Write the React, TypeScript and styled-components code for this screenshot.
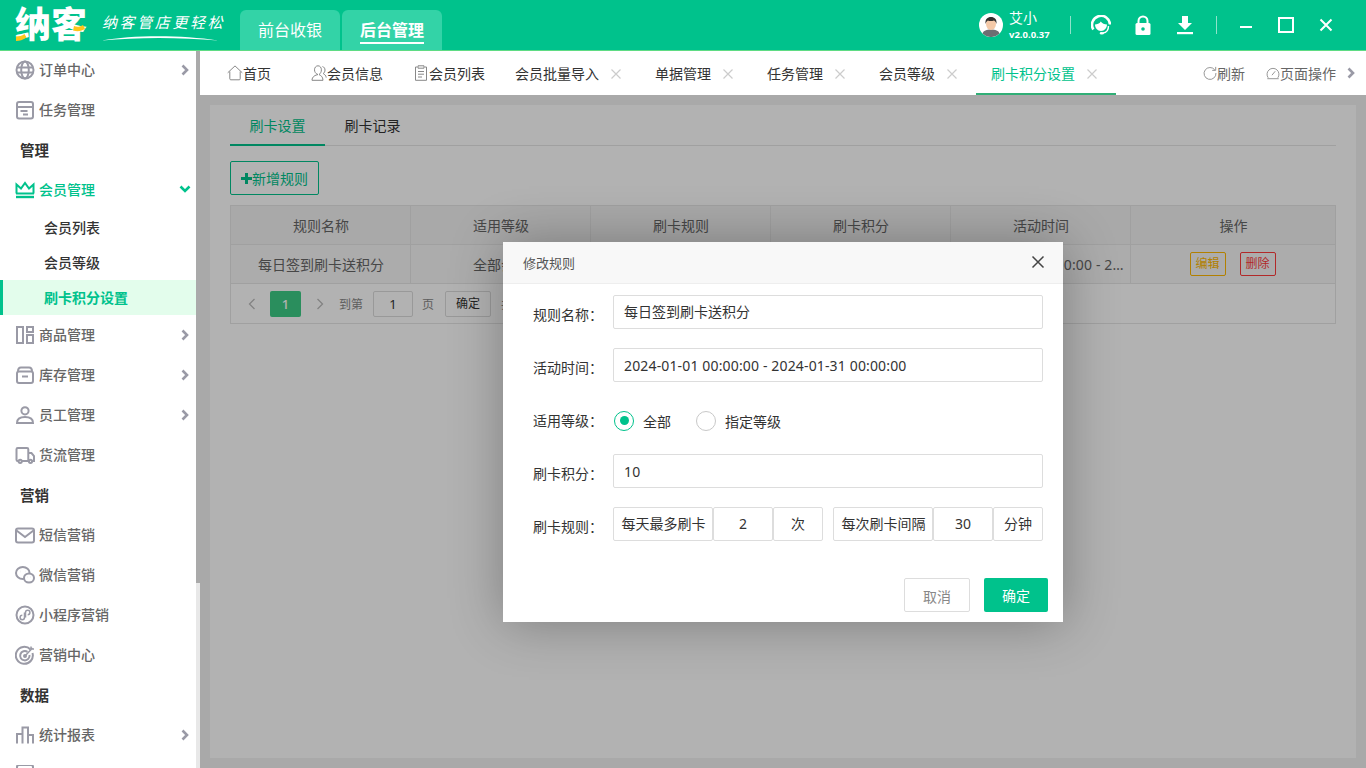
import React from 'react';
import styled, { createGlobalStyle } from 'styled-components';

const GREEN = '#00c28c';
const ICON_GRAY = '#9a9aa6';

type IconName =
    | 'globe' | 'task' | 'crown' | 'columns' | 'box' | 'user' | 'truck'
    | 'mail' | 'wechat' | 'mini' | 'target' | 'bars' | 'doc';

const iconShapes: Record<IconName, React.ReactNode> = {
    globe: (
        <>
            <circle cx="10" cy="10" r="8.5" />
            <ellipse cx="10" cy="10" rx="3.8" ry="8.5" />
            <path d="M2 7.5h16M2 12.5h16" />
        </>
    ),
    task: (
        <>
            <rect x="2" y="2" width="16" height="16.5" rx="2" />
            <path d="M2 7h16M5.5 11h7M8 14.5h5" />
        </>
    ),
    crown: (
        <>
            <path d="M1.5 13.5V4.5L6 8.5 10 3l4 5.5 4.5-4v9" />
            <path d="M1 13.5h18" />
            <path d="M1 17h18" strokeWidth="2.4" />
        </>
    ),
    columns: (
        <>
            <rect x="2" y="2" width="6" height="16" />
            <rect x="12" y="2" width="6" height="5" />
            <rect x="12" y="10" width="6" height="8" />
        </>
    ),
    box: (
        <>
            <path d="M3 6.5C3 4 4 2.5 6 2.5h8c2 0 3 1.5 3 4" />
            <rect x="2" y="6.5" width="16" height="11.5" rx="2" />
            <path d="M7 11.5h6" />
        </>
    ),
    user: (
        <>
            <circle cx="10" cy="5.8" r="3.6" />
            <path d="M2 18c0-4 3-6 8-6s8 2 8 6z" />
        </>
    ),
    truck: (
        <>
            <path d="M3.5 16H2.8C2 16 1.5 15.5 1.5 14.7V4.3C1.5 3.5 2 3 2.8 3H12c.8 0 1.3.5 1.3 1.3V16H7" />
            <path d="M13.5 8h3L19 11v5h-1.5" />
            <circle cx="5.2" cy="16.3" r="1.6" />
            <circle cx="15.5" cy="16.3" r="1.6" />
        </>
    ),
    mail: (
        <>
            <rect x="1" y="3.5" width="18" height="14" rx="2" />
            <path d="M1.5 5.5 10 12l8.5-6.5" />
        </>
    ),
    wechat: (
        <>
            <ellipse cx="7.8" cy="8" rx="6.8" ry="6" />
            <ellipse cx="14" cy="13" rx="5" ry="4.6" fill="#fff" />
            <path d="M5.5 6.5h.1M10 6.5h.1M12.5 12h.1M15.5 12h.1" />
        </>
    ),
    mini: (
        <>
            <circle cx="10" cy="10" r="8.5" />
            <path d="M9.5 7.5v5a2.2 2.2 0 1 1-2.2-2.2M10.5 12.5v-5a2.2 2.2 0 1 1 2.2 2.2" strokeWidth="1.5" />
        </>
    ),
    target: (
        <>
            <path d="M15.5 4.5A8.5 8.5 0 1 0 17.5 8" />
            <path d="M12.5 6.8A4.7 4.7 0 1 0 14.5 10" />
            <circle cx="10" cy="11" r="1" />
            <path d="M10 11 17.5 3M16 1.5V4h3" strokeWidth="1.5" />
        </>
    ),
    bars: <path d="M2 18.5V9h5.5v9.5M7.5 18.5V2.5H13v16M13 18.5V10h5v8.5" />,
    doc: <rect x="2" y="0" width="16" height="18" rx="2" />,
};

const GlobalStyle = createGlobalStyle`
    html, body {
        margin: 0;
        padding: 0;
        overflow: hidden;
    }
    body {
        font-family: "Noto Sans", "Noto Sans CJK SC", sans-serif;
        font-size: 14px;
        color: #333;
    }
    * {
        box-sizing: border-box;
    }
`;

type NavItem =
    | { kind: 'section'; label: string }
    | { kind: 'item'; label: string; icon: IconName; arrow?: 'right' | 'down'; open?: boolean }
    | { kind: 'sub'; label: string; active?: boolean };

const navItems: NavItem[] = [
    { kind: 'item', label: '订单中心', icon: 'globe', arrow: 'right' },
    { kind: 'item', label: '任务管理', icon: 'task' },
    { kind: 'section', label: '管理' },
    { kind: 'item', label: '会员管理', icon: 'crown', arrow: 'down', open: true },
    { kind: 'sub', label: '会员列表' },
    { kind: 'sub', label: '会员等级' },
    { kind: 'sub', label: '刷卡积分设置', active: true },
    { kind: 'item', label: '商品管理', icon: 'columns', arrow: 'right' },
    { kind: 'item', label: '库存管理', icon: 'box', arrow: 'right' },
    { kind: 'item', label: '员工管理', icon: 'user', arrow: 'right' },
    { kind: 'item', label: '货流管理', icon: 'truck' },
    { kind: 'section', label: '营销' },
    { kind: 'item', label: '短信营销', icon: 'mail' },
    { kind: 'item', label: '微信营销', icon: 'wechat' },
    { kind: 'item', label: '小程序营销', icon: 'mini' },
    { kind: 'item', label: '营销中心', icon: 'target' },
    { kind: 'section', label: '数据' },
    { kind: 'item', label: '统计报表', icon: 'bars', arrow: 'right' },
    { kind: 'item', label: '系统设置', icon: 'doc' },
];

type Tab = { label: string; icon?: 'home' | 'person' | 'clip'; closable?: boolean; active?: boolean; gap?: number };

const tabs: Tab[] = [
    { label: '首页', icon: 'home', gap: 10 },
    { label: '会员信息', icon: 'person' },
    { label: '会员列表', icon: 'clip' },
    { label: '会员批量导入', closable: true },
    { label: '单据管理', closable: true },
    { label: '任务管理', closable: true },
    { label: '会员等级', closable: true },
    { label: '刷卡积分设置', closable: true, active: true },
];

function NavIcon({ name, open }: { name: IconName; open?: boolean }) {
    return (
        <SideIcon viewBox="0 0 20 20" $open={open}>
            {iconShapes[name]}
        </SideIcon>
    );
}

function Chevron({ dir }: { dir: 'right' | 'down' }) {
    return (
        <ChevronIcon viewBox="0 0 12 12" $down={dir === 'down'}>
            {dir === 'right' ? <path d="M3.5 1.5 8 6l-4.5 4.5" /> : <path d="M1.5 2.5 6 7l4.5-4.5" />}
        </ChevronIcon>
    );
}

function TabIcon({ name }: { name: 'home' | 'person' | 'clip' }) {
    return (
        <ThinIcon viewBox="0 0 16 16">
            {name === 'home' && <path d="M.7 7.8 8 .9l7.3 6.9M2.8 6.5v7.3c0 .6.4 1 1 1h8.400c.6 0 1-.4 1-1V6.500" />}
            {name === 'person' && (
                <>
                    <path d="M7 9.6C4.500 10 1 11.500 1 15.300h11c0-3.800-2.500-5-4-5.700 1.500-1 2.400-2.800 2.400-4.800C10.400 2.500 9 .8 7 .8S3.500 2.500 3.500 4.800c0 2 1 3.700 3.500 4.800" />
                    <path d="M11.500 1.500c1.600.6 2.500 1.800 2.500 3.500 0 1.500-.6 2.800-1.800 3.600 1.400.7 2.800 1.900 3 4" />
                </>
            )}
            {name === 'clip' && (
                <>
                    <path d="M4.500 2H2.500v13.300h11V2h-2" />
                    <path d="M5 .8h6v2.400H5zM5 6.500h6M5 9.200h6M5 12h4" />
                </>
            )}
        </ThinIcon>
    );
}

function Logo() {
    return (
        <LogoBox>
            <LogoWord>纳客</LogoWord>
            <LogoAccent viewBox="0 0 72 30">
                <path d="M1 23.500c3 0 6-.7 8.500-2.500l2 3.500C8 27 4.500 28 1 28z" fill="#ffc61a" />
                <path d="M59 13c3 1.200 6 1 9-1l2 3.500c-3 2.500-7 3.500-12 2z" fill="#ffc61a" />
            </LogoAccent>
        </LogoBox>
    );
}

function Slogan() {
    return (
        <SloganBox>
            <SloganText>纳客管店更轻松</SloganText>
            <SloganSwoosh viewBox="0 0 120 8">
                <path d="M0 6.500C30 1 80 .5 118 6.500 80 3 35 3 0 6.500z" fill="#fff" />
            </SloganSwoosh>
        </SloganBox>
    );
}

function Avatar() {
    return (
        <AvatarIcon viewBox="0 0 24 24">
            <circle cx="12" cy="12" r="12" fill="#fff" />
            <path d="M3.500 20.500c1-3 4-4 8.500-4s7.500 1 8.500 4A12 12 0 0 1 3.500 20.500z" fill="#6d6e72" />
            <ellipse cx="12" cy="11" rx="5" ry="6" fill="#f4c9a8" />
            <path d="M6.500 11C6 6 8.500 4 12 4s6 2 5.500 7c-.5-2-1.500-3-2.500-3.500-2 .8-5 .8-6 0-1 .5-2 1.500-2.500 3.500z" fill="#33302e" />
        </AvatarIcon>
    );
}

function Header() {
    return (
        <Top>
            <Logo />
            <Slogan />
            <ModeTabs>
                <ModeTab>前台收银</ModeTab>
                <ModeTab $active>
                    <span>后台管理</span>
                </ModeTab>
            </ModeTabs>
            <TopRight>
                <Avatar />
                <UserInfo>
                    <UserName>艾小</UserName>
                    <Version>v2.0.0.37</Version>
                </UserInfo>
                <TopDivider />
                <ToolIcon viewBox="0 0 20 20">
                    <path d="M2.300 14.500A9 9 0 1 1 19 9.500" fill="none" stroke="#fff" strokeWidth="2.600" />
                    <path d="M4 9.500c1.800 0 4.500-.8 5.800-3 1.200 2 3.700 3 6.200 3 0 3.500-2.500 6.500-6 6.500s-6-3-6-6.500z" fill="#fff" />
                    <path d="M17.500 11c0 3.500-2 6.500-5.500 7" fill="none" stroke="#fff" strokeWidth="1.400" />
                    <ellipse cx="10.800" cy="18.200" rx="2.200" ry="1.300" fill="#fff" />
                </ToolIcon>
                <ToolIcon viewBox="0 0 20 20" $gap={22}>
                    <path d="M5.500 9V6a4.500 4.500 0 0 1 9 0v3" fill="none" stroke="#fff" strokeWidth="2" />
                    <rect x="2.500" y="8" width="15" height="12" rx="1.500" fill="#fff" />
                    <circle cx="10" cy="14" r="1.800" fill={GREEN} />
                </ToolIcon>
                <ToolIcon viewBox="0 0 20 20" $gap={22}>
                    <path d="M7 1h6v7h4l-7 7-7-7h4z" fill="#fff" />
                    <rect x="2" y="17" width="16" height="2.200" fill="#fff" />
                </ToolIcon>
                <TopDivider $left={21} />
                <WindowIcon viewBox="0 0 16 16" $left={21}>
                    <path d="M2 10h12" />
                </WindowIcon>
                <WindowIcon viewBox="0 0 16 16" $left={24}>
                    <rect x="1" y="1" width="14" height="14" />
                </WindowIcon>
                <WindowIcon viewBox="0 0 16 16" $left={24}>
                    <path d="M2.500 2.500l11 11M13.500 2.500l-11 11" />
                </WindowIcon>
            </TopRight>
        </Top>
    );
}

function Sidebar() {
    return (
        <SideWrap>
            <SideMenu>
                {navItems.map((item) => {
                    if (item.kind === 'section') {
                        return <SectionTitle key={item.label}>{item.label}</SectionTitle>;
                    }
                    if (item.kind === 'sub') {
                        return (
                            <SubRow key={item.label} $active={item.active}>
                                {item.label}
                            </SubRow>
                        );
                    }
                    return (
                        <MenuRow key={item.label} $open={item.open}>
                            <NavIcon name={item.icon} open={item.open} />
                            <MenuLabel>{item.label}</MenuLabel>
                            {item.arrow && <Chevron dir={item.arrow} />}
                        </MenuRow>
                    );
                })}
            </SideMenu>
            <ScrollTrack>
                <ScrollThumb />
            </ScrollTrack>
        </SideWrap>
    );
}

function TabBar() {
    return (
        <TabsRow>
            {tabs.map((tab) => (
                <TabItem key={tab.label} $active={tab.active} $closable={tab.closable} $gap={tab.gap}>
                    {tab.icon && <TabIcon name={tab.icon} />}
                    {tab.label}
                    {tab.closable && (
                        <CloseMark viewBox="0 0 12 12">
                            <path d="M1.500 1.500l9 9M10.500 1.500l-9 9" />
                        </CloseMark>
                    )}
                </TabItem>
            ))}
            <TabTools>
                <ToolLink>
                    <RefreshIcon viewBox="0 0 16 16">
                        <path d="M13.500 4.500A6.800 6.800 0 1 0 14.800 8" />
                        <path d="M14.500 1v4h-4" />
                    </RefreshIcon>
                    刷新
                </ToolLink>
                <ToolLink $left={21}>
                    <RefreshIcon viewBox="0 0 16 16">
                        <path d="M2.500 13.500A6.800 6.800 0 1 1 13.500 13.500M1.500 14.500h13M6.800 10.500 10.500 6" />
                    </RefreshIcon>
                    页面操作
                </ToolLink>
                <MoreChevron viewBox="0 0 12 12">
                    <path d="M3.500 1.500 8 6l-4.500 4.500" />
                </MoreChevron>
            </TabTools>
        </TabsRow>
    );
}

function RuleTable() {
    return (
        <>
            <Table>
                <colgroup>
                    <col width="180" />
                    <col width="180" />
                    <col width="180" />
                    <col width="180" />
                    <col width="180" />
                    <col />
                </colgroup>
                <thead>
                    <tr>
                        <Th>规则名称</Th>
                        <Th>适用等级</Th>
                        <Th>刷卡规则</Th>
                        <Th>刷卡积分</Th>
                        <Th>活动时间</Th>
                        <Th>操作</Th>
                    </tr>
                </thead>
                <tbody>
                    <tr>
                        <Td>每日签到刷卡送积分</Td>
                        <Td>全部会员</Td>
                        <Td>每天最多2次</Td>
                        <Td>10</Td>
                        <TimeCell>2024-01-01 00:00:00 - 2024-01-31 00:00:00</TimeCell>
                        <ActionCell>
                            <ActionBtn $color="#ffb800">编辑</ActionBtn>
                            <ActionBtn $color="#ff3b3b" $left={14}>
                                删除
                            </ActionBtn>
                        </ActionCell>
                    </tr>
                </tbody>
            </Table>
            <Pager>
                <PagerArrow viewBox="0 0 12 12" $left={15}>
                    <path d="M8.500 1 3.500 6l5 5" />
                </PagerArrow>
                <PageCurrent>1</PageCurrent>
                <PagerArrow viewBox="0 0 12 12" $left={13}>
                    <path d="M3.500 1l5 5-5 5" />
                </PagerArrow>
                <PagerText $left={13}>到第</PagerText>
                <PagerInput>1</PagerInput>
                <PagerText $left={9}>页</PagerText>
                <PagerBtn>确定</PagerBtn>
                <PagerText $left={10}>共 1 条</PagerText>
            </Pager>
        </>
    );
}

function RuleDialog() {
    return (
        <Dialog>
            <DialogTitle>
                修改规则
                <DialogClose viewBox="0 0 14 14">
                    <path d="M1.500 1.500l11 11M12.500 1.500l-11 11" />
                </DialogClose>
            </DialogTitle>
            <DialogBody>
                <FormRow>
                    <FormLabel>规则名称：</FormLabel>
                    <TextBox>每日签到刷卡送积分</TextBox>
                </FormRow>
                <FormRow>
                    <FormLabel>活动时间：</FormLabel>
                    <TextBox $digits>2024-01-01 00:00:00 - 2024-01-31 00:00:00</TextBox>
                </FormRow>
                <FormRow>
                    <FormLabel>适用等级：</FormLabel>
                    <RadioGroup>
                        <Radio $checked />
                        <RadioText>全部</RadioText>
                        <Radio />
                        <RadioText>指定等级</RadioText>
                    </RadioGroup>
                </FormRow>
                <FormRow>
                    <FormLabel>刷卡积分：</FormLabel>
                    <TextBox $digits>10</TextBox>
                </FormRow>
                <FormRow>
                    <FormLabel>刷卡规则：</FormLabel>
                    <RuleGroup>
                        <RuleCell $w={100} $label>每天最多刷卡</RuleCell>
                        <RuleCell $w={60}>2</RuleCell>
                        <RuleCell $w={50}>次</RuleCell>
                        <RuleCell $w={100} $label $gap>每次刷卡间隔</RuleCell>
                        <RuleCell $w={60}>30</RuleCell>
                        <RuleCell $w={50}>分钟</RuleCell>
                    </RuleGroup>
                </FormRow>
            </DialogBody>
            <DialogFoot>
                <CancelBtn>取消</CancelBtn>
                <OkBtn>确定</OkBtn>
            </DialogFoot>
        </Dialog>
    );
}

export default function App() {
    return (
        <Page>
            <GlobalStyle />
            <Header />
            <Body>
                <Sidebar />
                <Right>
                    <TabBar />
                    <Main>
                        <Panel>
                            <PanelTabs>
                                <PanelTab $active>刷卡设置</PanelTab>
                                <PanelTab>刷卡记录</PanelTab>
                            </PanelTabs>
                            <AddBtn>
                                <AddPlus viewBox="0 0 11 11">
                                    <path d="M5.500 0v11M0 5.500h11" />
                                </AddPlus>
                                新增规则
                            </AddBtn>
                            <RuleTable />
                        </Panel>
                        <Shade>
                            <RuleDialog />
                        </Shade>
                    </Main>
                </Right>
            </Body>
        </Page>
    );
}

const Page = styled.div`
    width: 1366px;
    height: 768px;
    display: flex;
    flex-direction: column;
    overflow: hidden;
    background: #fff;
`;

const Top = styled.header`
    flex: none;
    height: 50px;
    background: ${GREEN};
    box-shadow: 0 1px 0 #5fdc84;
    display: flex;
    align-items: flex-start;
    position: relative;
    z-index: 2;
`;

const LogoBox = styled.div`
    position: relative;
    margin: 6px 0 0 15px;
    width: 72px;
    height: 38px;
`;

const LogoWord = styled.div`
    color: #fff;
    font-size: 36px;
    line-height: 38px;
    font-weight: 900;
    white-space: nowrap;
`;

const LogoAccent = styled.svg`
    position: absolute;
    left: 0;
    top: 7px;
    width: 72px;
    height: 30px;
`;

const SloganBox = styled.div`
    margin: 11px 0 0 15px;
    width: 123px;
`;

const SloganText = styled.div`
    color: #fff;
    font-size: 15px;
    line-height: 22px;
    font-style: italic;
    letter-spacing: 2.6px;
    white-space: nowrap;
`;

const SloganSwoosh = styled.svg`
    display: block;
    width: 118px;
    height: 8px;
    margin-top: 1px;
`;

const ModeTabs = styled.div`
    display: flex;
    gap: 2px;
    margin: 10px 0 0 15px;
`;

const ModeTab = styled.div<{ $active?: boolean }>`
    width: 100px;
    height: 40px;
    border-radius: 6px 6px 0 0;
    background: #33d3a7;
    color: #fff;
    font-size: 16px;
    padding-bottom: 2px;
    font-weight: ${(p) => (p.$active ? 700 : 400)};
    display: flex;
    align-items: center;
    justify-content: center;

    & span {
        line-height: 24px;
        margin-top: 4px;
        border-bottom: 2px solid #fff;
    }
`;

const TopRight = styled.div`
    margin-left: auto;
    display: flex;
    align-items: center;
    height: 50px;
    padding-right: 32px;
`;

const AvatarIcon = styled.svg`
    width: 24px;
    height: 24px;
`;

const UserInfo = styled.div`
    margin-left: 6px;
    padding-top: 2px;
    width: 41px;
    color: #fff;
`;

const UserName = styled.div`
    font-size: 14px;
    line-height: 18px;
`;

const Version = styled.div`
    font-size: 9.500px;
    line-height: 16px;
    font-weight: 700;
    white-space: nowrap;
`;

const TopDivider = styled.div<{ $left?: number }>`
    width: 1px;
    height: 18px;
    background: #8fe3cb;
    margin-left: ${(p) => p.$left ?? 20}px;
`;

const ToolIcon = styled.svg<{ $gap?: number }>`
    width: 20px;
    height: 20px;
    margin-left: ${(p) => p.$gap ?? 20}px;
`;

const WindowIcon = styled.svg<{ $left: number }>`
    width: 16px;
    height: 16px;
    margin-left: ${(p) => p.$left}px;
    fill: none;
    stroke: #fff;
    stroke-width: 2;
`;

const Body = styled.div`
    flex: 1;
    min-height: 0;
    display: flex;
`;

const SideWrap = styled.aside`
    flex: none;
    width: 200px;
    display: flex;
    overflow: hidden;
`;

const SideMenu = styled.nav`
    width: 196px;
    background: #fff;
`;

const ScrollTrack = styled.div`
    width: 4px;
    background: #e8e8e8;
`;

const ScrollThumb = styled.div`
    height: 533px;
    background: #aaaaaa;
`;

const MenuRow = styled.div<{ $open?: boolean }>`
    height: 40px;
    padding: 0 5px 0 15px;
    display: flex;
    align-items: center;
    gap: 4px;
    font-weight: 500;
    color: ${(p) => (p.$open ? GREEN : '#666')};
`;

const SideIcon = styled.svg<{ $open?: boolean }>`
    width: 20px;
    height: 20px;
    flex: none;
    fill: none;
    stroke: ${(p) => (p.$open ? GREEN : ICON_GRAY)};
    stroke-width: 2;
`;

const MenuLabel = styled.span`
    flex: 1;
    padding-bottom: 2px;
`;

const ChevronIcon = styled.svg<{ $down?: boolean }>`
    width: 12px;
    height: 12px;
    fill: none;
    stroke: ${(p) => (p.$down ? GREEN : ICON_GRAY)};
    stroke-width: 2.600;
`;

const SectionTitle = styled.div`
    height: 40px;
    padding-left: 20px;
    line-height: 40px;
    font-size: 14.500px;
    font-weight: 700;
    color: #333;
`;

const SubRow = styled.div<{ $active?: boolean }>`
    height: 35px;
    line-height: 35px;
    padding-left: ${(p) => (p.$active ? 41 : 44)}px;
    font-weight: ${(p) => (p.$active ? 700 : 500)};
    color: ${(p) => (p.$active ? GREEN : '#333')};
    background: ${(p) => (p.$active ? '#e3fdec' : 'transparent')};
    border-left: ${(p) => (p.$active ? `3px solid ${GREEN}` : 'none')};
`;

const Right = styled.div`
    flex: 1;
    min-width: 0;
    display: flex;
    flex-direction: column;
`;

const TabsRow = styled.div`
    flex: none;
    height: 45px;
    background: #fff;
    padding-left: 12px;
    display: flex;
    align-items: flex-end;
`;

const TabItem = styled.div<{ $active?: boolean; $closable?: boolean; $gap?: number }>`
    height: 44px;
    padding: 1px ${(p) => (p.$closable ? 18 : 15)}px 0 15px;
    margin-right: ${(p) => p.$gap ?? 0}px;
    display: flex;
    align-items: center;
    color: ${(p) => (p.$active ? GREEN : '#333')};
    border-bottom: 2px solid ${(p) => (p.$active ? '#30ae76' : 'transparent')};
    white-space: nowrap;
`;

const ThinIcon = styled.svg`
    width: 16px;
    height: 16px;
    flex: none;
    fill: none;
    stroke: #888;
    stroke-width: 1;
`;

const RefreshIcon = styled(ThinIcon)`
    width: 14px;
    height: 14px;
`;

const CloseMark = styled.svg`
    width: 12px;
    height: 12px;
    margin: 2px 0 0 11px;
    fill: none;
    stroke: #ccc;
    stroke-width: 1.200;
`;

const TabTools = styled.div`
    margin-left: auto;
    height: 44px;
    display: flex;
    align-items: center;
    padding-right: 9px;
`;

const ToolLink = styled.div<{ $left?: number }>`
    display: flex;
    align-items: center;
    margin-left: ${(p) => p.$left ?? 0}px;
    color: #666;
    white-space: nowrap;
`;

const MoreChevron = styled.svg`
    width: 12px;
    height: 12px;
    margin-left: 9px;
    fill: none;
    stroke: ${ICON_GRAY};
    stroke-width: 2.600;
`;

const Main = styled.main`
    flex: 1;
    min-height: 0;
    position: relative;
    background: #f2f2f2;
    padding: 10px;
    display: flex;
`;

const Panel = styled.section`
    flex: 1;
    min-width: 0;
    background: #fff;
    padding: 0 20px;
`;

const PanelTabs = styled.div`
    height: 41px;
    display: flex;
    border-bottom: 1px solid #e6e6e6;
`;

const PanelTab = styled.div<{ $active?: boolean }>`
    width: 95px;
    height: 41px;
    line-height: 41px;
    text-align: center;
    color: ${(p) => (p.$active ? GREEN : '#333')};
    border-bottom: 2px solid ${(p) => (p.$active ? GREEN : 'transparent')};
`;

const AddBtn = styled.div`
    margin-top: 15px;
    width: 89px;
    height: 34px;
    border: 1px solid ${GREEN};
    border-radius: 2px;
    color: ${GREEN};
    display: flex;
    align-items: center;
    padding-left: 10px;
    white-space: nowrap;
`;

const AddPlus = styled.svg`
    width: 11px;
    height: 11px;
    flex: none;
    fill: none;
    stroke: ${GREEN};
    stroke-width: 3;
`;

const Table = styled.table`
    margin-top: 10px;
    width: 100%;
    table-layout: fixed;
    border-collapse: collapse;
    color: #666;
`;

const Th = styled.th`
    height: 39px;
    padding: 0 0 0 1px;
    font-weight: 400;
    background: #f2f2f2;
    border: 1px solid #e6e6e6;
`;

const Td = styled.td`
    height: 39px;
    padding: 0 0 0 1px;
    text-align: center;
    background: #f6f6f6;
    border: 1px solid #e6e6e6;
`;

const TimeCell = styled(Td)`
    padding: 0 6px;
    overflow: hidden;
    white-space: nowrap;
    text-overflow: ellipsis;
    letter-spacing: 0.15px;
`;

const ActionCell = styled(Td)`
    padding: 0 1px 0 0;
`;

const ActionBtn = styled.span<{ $color: string; $left?: number }>`
    display: inline-block;
    width: 36px;
    height: 24px;
    line-height: 22px;
    margin-left: ${(p) => p.$left ?? 0}px;
    font-size: 12px;
    color: ${(p) => p.$color};
    border: 1px solid ${(p) => p.$color};
    border-radius: 2px;
    vertical-align: middle;
`;

const Pager = styled.div`
    height: 40px;
    border: 1px solid #e6e6e6;
    border-top: none;
    display: flex;
    align-items: center;
    font-size: 12px;
    color: #888;
`;

const PagerArrow = styled.svg<{ $left: number }>`
    width: 12px;
    height: 14px;
    margin-left: ${(p) => p.$left}px;
    fill: none;
    stroke: #bbb;
    stroke-width: 1.300;
`;

const PageCurrent = styled.div`
    width: 31px;
    height: 26px;
    margin-left: 12px;
    line-height: 26px;
    text-align: center;
    color: #fff;
    font-size: 13px;
    font-weight: 500;
    background: #3dcc86;
    border-radius: 2px;
`;

const PagerText = styled.span<{ $left: number }>`
    margin-left: ${(p) => p.$left}px;
    white-space: nowrap;
`;

const PagerInput = styled.div`
    width: 40px;
    height: 26px;
    margin-left: 10px;
    line-height: 24px;
    text-align: center;
    color: #333;
    font-size: 13px;
    border: 1px solid #dcdcdc;
    border-radius: 2px;
`;

const PagerBtn = styled.div`
    width: 46px;
    height: 26px;
    margin-left: 11px;
    line-height: 24px;
    text-align: center;
    color: #333;
    border: 1px solid #dcdcdc;
    border-radius: 2px;
`;

const Shade = styled.div`
    position: absolute;
    inset: 0;
    background: rgba(0, 0, 0, 0.3);
    display: flex;
    align-items: center;
    justify-content: center;
`;

const Dialog = styled.div`
    width: 560px;
    height: 380px;
    background: #fff;
    display: flex;
    flex-direction: column;
    box-shadow: 1px 1px 50px rgba(0, 0, 0, 0.3);
`;

const DialogTitle = styled.div`
    height: 42px;
    flex: none;
    padding: 0 18px 0 20px;
    display: flex;
    align-items: center;
    justify-content: space-between;
    font-size: 13px;
    color: #555;
    background: #f8f8f8;
    border-bottom: 1px solid #eee;
`;

const DialogClose = styled.svg`
    width: 14px;
    height: 14px;
    fill: none;
    stroke: #444;
    stroke-width: 1.500;
`;

const DialogBody = styled.div`
    padding: 11px 20px 0 30px;
    display: flex;
    flex-direction: column;
    gap: 19px;
`;

const FormRow = styled.div`
    height: 34px;
    display: flex;
`;

const FormLabel = styled.div`
    width: 80px;
    flex: none;
    line-height: 40px;
    color: #333;
`;

const TextBox = styled.div<{ $digits?: boolean }>`
    flex: 1;
    height: 34px;
    line-height: ${(p) => (p.$digits ? 34 : 32)}px;
    letter-spacing: ${(p) => (p.$digits ? 0.15 : 0)}px;
    padding-left: 10px;
    border: 1px solid #ddd;
    border-radius: 2px;
    color: #333;
`;

const RadioGroup = styled.div`
    display: flex;
    align-items: center;
    height: 40px;
    padding-left: 1px;
`;

const Radio = styled.span<{ $checked?: boolean }>`
    width: 20px;
    height: 20px;
    border-radius: 50%;
    border: 1.500px solid ${(p) => (p.$checked ? GREEN : '#c8c8c8')};
    display: flex;
    align-items: center;
    justify-content: center;

    &::after {
        content: '';
        display: ${(p) => (p.$checked ? 'block' : 'none')};
        width: 9px;
        height: 9px;
        border-radius: 50%;
        background: ${GREEN};
    }
`;

const RadioText = styled.span`
    margin: 1px 25px 0 9px;
    color: #333;
`;

const RuleGroup = styled.div`
    flex: 1;
    display: flex;
`;

const RuleCell = styled.div<{ $w: number; $label?: boolean; $gap?: boolean }>`
    width: ${(p) => p.$w}px;
    height: 34px;
    line-height: 32px;
    margin-left: ${(p) => (p.$gap ? 10 : 0)}px;
    padding-left: ${(p) => (p.$label ? 1 : 0)}px;
    text-align: center;
    border: 1px solid #ddd;
    border-radius: 2px;
    color: #333;
    white-space: nowrap;
`;

const DialogFoot = styled.div`
    margin-top: auto;
    padding: 0 15px 10px 0;
    display: flex;
    justify-content: flex-end;
    gap: 14px;
`;

const CancelBtn = styled.div`
    width: 66px;
    height: 34px;
    line-height: 36px;
    text-align: center;
    color: #888;
    border: 1px solid #ddd;
    border-radius: 2px;
`;

const OkBtn = styled.div`
    width: 64px;
    height: 34px;
    line-height: 36px;
    text-align: center;
    color: #fff;
    background: ${GREEN};
    border-radius: 2px;
`;
